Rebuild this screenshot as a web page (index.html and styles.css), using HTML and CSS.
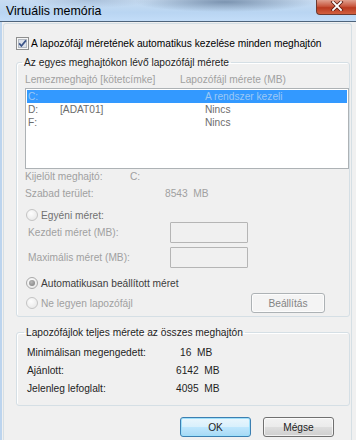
FILE: index.html
```html
<!DOCTYPE html>
<html lang="hu">
<head>
    <meta charset="UTF-8">
    <title>Virtuális memória</title>
    <link rel="stylesheet" href="styles.css">
</head>
<body>
    <div class="window">
        <div class="titlebar">
            <span class="title">Virtuális memória</span>
            <div class="close">
                <svg width="14" height="10" viewBox="0 0 14 10">
                    <path d="M3 1 L11 9 M11 1 L3 9" stroke="#5a1a10" stroke-width="3.4" stroke-linecap="square"/>
                    <path d="M3 1 L11 9 M11 1 L3 9" stroke="#fff" stroke-width="1.8" stroke-linecap="square"/>
                </svg>
            </div>
        </div>

        <div class="client">
            <div class="panel">
                <label class="check-row">
                    <span class="checkbox">
                        <svg width="13" height="13" viewBox="0 0 13 13">
                            <rect x="0.5" y="0.5" width="12" height="12" fill="#f6f6f6" stroke="#8e8f8f"/>
                            <rect x="2.5" y="2.5" width="8" height="8" fill="#dde2ea" stroke="#b4bac3"/>
                            <path d="M3.2 6.4 L5.4 9 L10 3.4" fill="none" stroke="#3b5488" stroke-width="1.7"/>
                        </svg>
                    </span>
                    A lapozófájl méretének automatikus kezelése minden meghajtón
                </label>

                <fieldset class="group group-drives">
                    <legend>Az egyes meghajtókon lévő lapozófájl mérete</legend>

                    <div class="list-head">
                        <span>Lemezmeghajtó [kötetcímke]</span>
                        <span>Lapozófájl mérete (MB)</span>
                    </div>

                    <div class="listbox">
                        <div class="row selected"><span>C:</span><span></span><span>A rendszer kezeli</span></div>
                        <div class="row"><span>D:</span><span>[ADAT01]</span><span>Nincs</span></div>
                        <div class="row"><span>F:</span><span></span><span>Nincs</span></div>
                    </div>

                    <div class="info">
                        <span>Kijelölt meghajtó:</span><span>C:</span><span></span>
                        <span class="info-gap">Szabad terület:</span><span class="info-gap"></span><span class="info-gap">8543&nbsp;&nbsp;MB</span>
                    </div>

                    <div class="radio-row radio-custom">
                        <span class="radio"></span>
                        <span class="radio-text dim">Egyéni méret:</span>
                    </div>

                    <div class="size-row">
                        <span class="size-label">Kezdeti méret (MB):</span>
                        <span class="textbox"></span>
                    </div>
                    <div class="size-row size-max">
                        <span class="size-label">Maximális méret (MB):</span>
                        <span class="textbox"></span>
                    </div>

                    <div class="radio-row radio-auto">
                        <span class="radio checked"></span>
                        <span class="radio-text">Automatikusan beállított méret</span>
                    </div>

                    <div class="last-row">
                        <div class="radio-row">
                            <span class="radio"></span>
                            <span class="radio-text disabled">Ne legyen lapozófájl</span>
                        </div>
                        <button class="btn btn-disabled" type="button">Beállítás</button>
                    </div>
                </fieldset>

                <fieldset class="group group-total">
                    <legend>Lapozófájlok teljes mérete az összes meghajtón</legend>
                    <div class="totals">
                        <span>Minimálisan megengedett:</span><span class="num-short">16&nbsp;&nbsp;MB</span>
                        <span>Ajánlott:</span><span>6142&nbsp;&nbsp;MB</span>
                        <span>Jelenleg lefoglalt:</span><span>4095&nbsp;&nbsp;MB</span>
                    </div>
                </fieldset>

                <div class="buttons">
                    <button class="btn btn-default" type="button">OK</button>
                    <button class="btn" type="button">Mégse</button>
                </div>
            </div>
        </div>
    </div>
</body>
</html>
```

FILE: styles.css
```css
body {
    margin: 0;
    font-family: "Liberation Sans", Arial, sans-serif;
    font-size: 10.2px;
    color: #1e1e1e;
    background-color: #f0f0f0;
}
.window {
    width: 356px;
    height: 440px;
    overflow: hidden;
    display: flex;
    flex-direction: column;
}
.titlebar {
    height: 21px;
    flex-shrink: 0;
    display: flex;
    align-items: flex-start;
    border-bottom: 1px solid #4f647b;
    background:
        radial-gradient(ellipse 90px 10px at 225px 2px, rgba(105, 130, 160, 0.8), rgba(105, 130, 160, 0)),
        radial-gradient(ellipse 60px 8px at 90px 0px, rgba(140, 165, 195, 0.5), rgba(140, 165, 195, 0)),
        linear-gradient(#c8dcf1, #b9d5f2 60%, #c3ddf8);
}
.title {
    font-size: 12.4px;
    color: #000;
    padding: 4px 0 0 6px;
    line-height: 14px;
}
.close {
    margin-left: auto;
    width: 40px;
    height: 15px;
    display: flex;
    justify-content: center;
    align-items: flex-start;
    padding-top: 1px;
    box-sizing: border-box;
    border: 1px solid #6d3a30;
    border-top: none;
    border-right: none;
    border-bottom-left-radius: 4px;
    background: linear-gradient(#e0a08f, #c8573e 45%, #b93a20 55%, #d2603f);
}
.client {
    flex: 1;
    border-left: 2px solid #bcd4ee;
    padding: 1px 0 0 1px;
    background-color: #f0f0f0;
}
.panel {
    height: 100%;
    width: 349px;
    box-sizing: border-box;
    border: 1px solid #d5dfe5;
    border-bottom: none;
    border-radius: 3px 3px 0 0;
    padding: 0 1px 0 12px;
}
.check-row {
    display: flex;
    align-items: center;
    height: 13px;
    margin-top: 13px;
    color: #000;
}
.checkbox {
    width: 13px;
    height: 13px;
    margin-right: 2px;
    display: flex;
}
.group {
    margin: 6px 0 0 0;
    padding: 0 0 0 8px;
    border: 1px solid #d5dfe5;
    border-radius: 3px;
    box-shadow: inset 1px 1px 0 #fff;
    min-width: 0;
}
.group legend {
    padding: 0 2px;
    margin-left: -3px;
    line-height: 13px;
    color: #1e1e1e;
}
.group-drives {
    height: 261px;
    box-sizing: border-box;
}
.list-head {
    margin-top: 4px;
    line-height: 13px;
    color: #a0a0a0;
    display: grid;
    grid-template-columns: 155px auto;
}
.listbox {
    margin-top: 2px;
    width: 324px;
    height: 81px;
    box-sizing: border-box;
    border: 1px solid #adb2b5;
    background-color: #fff;
    padding: 1px;
}
.row {
    display: grid;
    grid-template-columns: 33px 145px auto;
    line-height: 13px;
    color: #6d6d6d;
}
.row span:first-child {
    padding-left: 1px;
}
.row.selected {
    background-color: #3399ff;
    color: #9cc8f5;
}
.info {
    margin-top: 1px;
    display: grid;
    grid-template-columns: 105px 35px auto;
    line-height: 13px;
    color: #a0a0a0;
}
.info-gap {
    margin-top: 4px;
}
.radio-row {
    display: flex;
    align-items: center;
    height: 14px;
}
.radio-custom {
    margin-top: 8px;
}
.radio-auto {
    margin-top: 8px;
}
.radio {
    width: 12px;
    height: 12px;
    box-sizing: border-box;
    border-radius: 50%;
    border: 1px solid #c4c4c4;
    background: radial-gradient(circle at 40% 35%, #fdfdfd, #e4e4e4);
    margin: 0 3px 0 1px;
    display: flex;
    align-items: center;
    justify-content: center;
}
.radio.checked {
    border-color: #a9a9a9;
}
.radio.checked::after {
    content: "";
    width: 6px;
    height: 6px;
    border-radius: 50%;
    background: radial-gradient(circle at 40% 35%, #b8b8b8, #7d7d7d);
}
.radio-text {
    color: #3c3c3c;
}
.radio-text.dim {
    color: #707070;
}
.radio-text.disabled {
    color: #a0a0a0;
}
.size-row {
    display: flex;
    align-items: center;
    color: #a0a0a0;
}
.size-max {
    margin-top: 4px;
}
.size-label {
    width: 142px;
    padding-left: 3px;
}
.textbox {
    width: 78px;
    height: 21px;
    box-sizing: border-box;
    border: 1px solid #b5b5b5;
    border-radius: 1px;
    background-color: #f0f0f0;
}
.last-row {
    margin-top: 3px;
    display: flex;
    align-items: center;
    justify-content: space-between;
    padding-right: 24px;
}
.btn {
    width: 71px;
    height: 20px;
    padding: 0;
    font-family: inherit;
    font-size: 10.2px;
    color: #1e1e1e;
    border: 1px solid #707070;
    border-radius: 3px;
    background: linear-gradient(#f2f2f2, #ebebeb 48%, #dddddd 52%, #cfcfcf);
    box-shadow: inset 0 0 0 1px rgba(255, 255, 255, 0.7);
}
.btn-disabled {
    width: 74px;
    color: #838383;
    border-color: #adb2b5;
    background: #f4f4f4;
}
.btn-default {
    border-color: #3c7fb1;
    background: linear-gradient(#eaf6fd, #d9f0fc 48%, #bee6fd 52%, #a7d9f5);
    box-shadow: inset 0 0 0 1px #9ee0fb;
}
.group-total {
    margin-top: 9px;
    height: 80px;
    box-sizing: border-box;
    padding-left: 10px;
}
.totals {
    margin-top: 7px;
    display: grid;
    grid-template-columns: 149px auto;
    row-gap: 5px;
    line-height: 13px;
    color: #1e1e1e;
}
.num-short {
    padding-left: 4px;
}
.buttons {
    margin-top: 11px;
    display: flex;
    justify-content: flex-end;
    gap: 12px;
    padding-right: 16px;
}
```
